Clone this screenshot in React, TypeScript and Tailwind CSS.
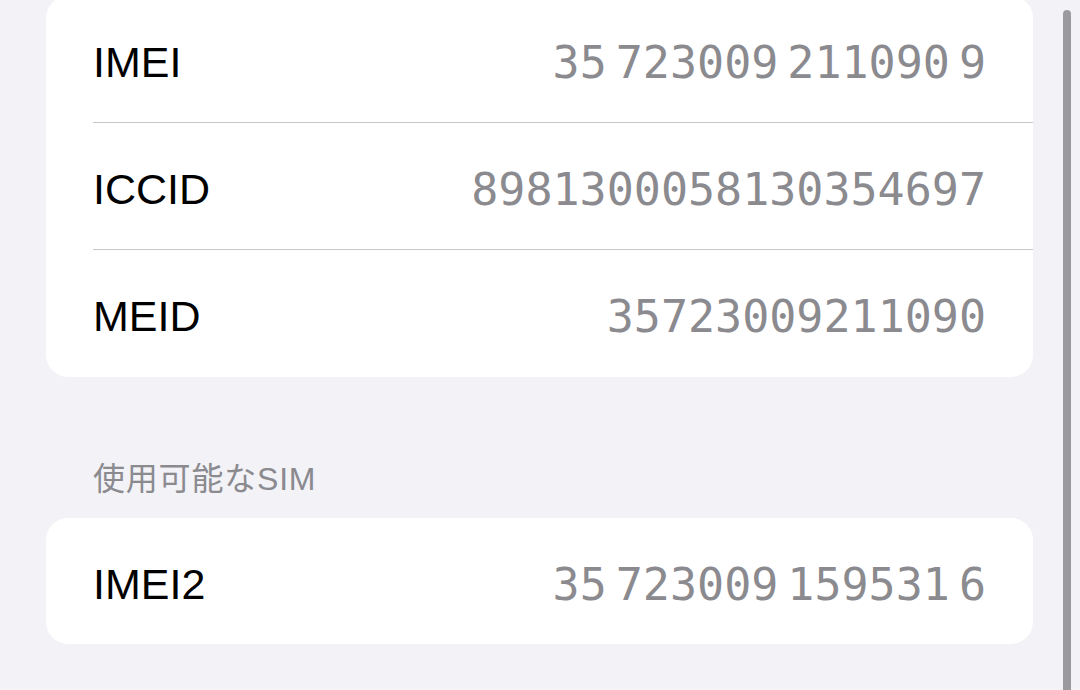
import React from "react";

type Row = { label: string; value: string[] };

const mainRows: Row[] = [
  { label: "IMEI", value: ["35", "723009", "211090", "9"] },
  { label: "ICCID", value: ["8981300058130354697"] },
  { label: "MEID", value: ["35723009211090"] },
];

const simRows: Row[] = [{ label: "IMEI2", value: ["35", "723009", "159531", "6"] }];

const InfoRow: React.FC<{ row: Row; last?: boolean }> = ({ row, last }) => {
  const grouped = row.value.length > 1;
  return (
    <div className="flex h-[127px] pl-[47px]">
      <div
        className={
          "flex flex-1 items-center justify-between pr-[47px] pt-[6px] " +
          (last ? "" : "border-b border-[#c8c8cc]")
        }
      >
        <span className="text-[43px] leading-none text-black font-['Liberation_Sans',sans-serif]">
          {row.label}
        </span>
        <span
          className={
            "flex text-[45px] leading-none text-[#8a8a8f] font-['DejaVu_Sans_Mono',monospace] " +
            (grouped ? "gap-[9px]" : "")
          }
        >
          {row.value.map((g, i) => (
            <span key={i}>{g}</span>
          ))}
        </span>
      </div>
    </div>
  );
};

export default function App() {
  return (
    <div className="relative h-[690px] w-[1080px] overflow-hidden bg-[#f2f2f7]">
      <div className="pl-[46px] pr-[47px]">
        <div className="-mt-[4px] rounded-[22px] bg-white">
          {mainRows.map((r, i) => (
            <InfoRow key={r.label} row={r} last={i === mainRows.length - 1} />
          ))}
        </div>

        <div className="mt-[83px] mb-[19px] pl-[47px] text-[32px] leading-[39px] tracking-[0.8px] text-[#8a8a8f] font-['Liberation_Sans','Noto_Sans_CJK_JP',sans-serif]">
          使用可能なSIM
        </div>

        <div className="h-[126px] rounded-[22px] bg-white [&>div]:h-[126px]">
          {simRows.map((r) => (
            <InfoRow key={r.label} row={r} last />
          ))}
        </div>
      </div>

      {/* scroll indicator */}
      <div className="absolute left-[1063px] top-[10px] h-[720px] w-[8px] rounded-full bg-[#9a9a9f]" />
    </div>
  );
}
